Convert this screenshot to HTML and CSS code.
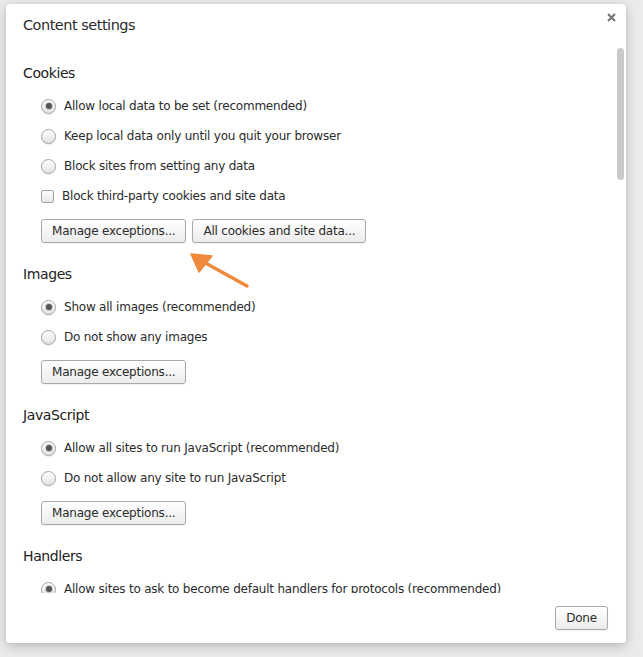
FILE: index.html
```html
<!DOCTYPE html>
<html lang="en">
<head>
<meta charset="utf-8">
<title>Content settings</title>
<link rel="stylesheet" href="styles.css">
</head>
<body>
<div class="dialog">
  <div class="header">
    <h1 class="title">Content settings</h1>
    <button class="close" aria-label="Close">
      <svg width="9" height="9" viewBox="0 0 9 9"><path d="M1 1 L8 8 M8 1 L1 8" stroke="#727272" stroke-width="2" fill="none"/></svg>
    </button>
  </div>
  <div class="body">
    <div class="scroll">
      <section class="section">
        <h2 class="heading">Cookies</h2>
        <label class="opt"><span class="radio checked"></span>Allow local data to be set (recommended)</label>
        <label class="opt"><span class="radio"></span>Keep local data only until you quit your browser</label>
        <label class="opt"><span class="radio"></span>Block sites from setting any data</label>
        <label class="opt"><span class="check"></span>Block third-party cookies and site data</label>
        <div class="btns">
          <button class="btn">Manage exceptions...</button>
          <button class="btn">All cookies and site data...</button>
        </div>
      </section>
      <section class="section">
        <h2 class="heading">Images</h2>
        <label class="opt"><span class="radio checked"></span>Show all images (recommended)</label>
        <label class="opt"><span class="radio"></span>Do not show any images</label>
        <div class="btns">
          <button class="btn">Manage exceptions...</button>
        </div>
      </section>
      <section class="section">
        <h2 class="heading">JavaScript</h2>
        <label class="opt"><span class="radio checked"></span>Allow all sites to run JavaScript (recommended)</label>
        <label class="opt"><span class="radio"></span>Do not allow any site to run JavaScript</label>
        <div class="btns">
          <button class="btn">Manage exceptions...</button>
        </div>
      </section>
      <section class="section">
        <h2 class="heading">Handlers</h2>
        <label class="opt"><span class="radio checked"></span>Allow sites to ask to become default handlers for protocols (recommended)</label>
      </section>
    </div>
    <div class="scrollbar"></div>
  </div>
  <div class="footer">
    <button class="btn done">Done</button>
  </div>
</div>
<svg class="arrow" width="643" height="657" viewBox="0 0 643 657">
  <line x1="247" y1="286" x2="200" y2="260" stroke="#ef8a3d" stroke-width="3.5" stroke-linecap="round"/>
  <polygon points="191,254 212,256 199,272" fill="#ef8a3d" stroke="#ef8a3d" stroke-width="1.5" stroke-linejoin="round"/>
</svg>
</body>
</html>
```
FILE: styles.css
```css
html, body {
  margin: 0;
  height: 100%;
}
body {
  background: #ebebeb;
  padding: 4px 0 0 6px;
  box-sizing: border-box;
  overflow: hidden;
  font-family: "DejaVu Sans", "Liberation Sans", sans-serif;
  color: #2b2b2b;
}
.dialog {
  width: 620px;
  height: 639px;
  background: #fff;
  border-radius: 3px;
  box-shadow: 0 3px 12px rgba(0, 0, 0, 0.22), 0 0 1px rgba(0, 0, 0, 0.25);
  display: flex;
  flex-direction: column;
  overflow: hidden;
}
.header {
  height: 44px;
  box-sizing: border-box;
  padding: 13px 10px 0 17px;
  display: flex;
  justify-content: space-between;
  align-items: flex-start;
  flex: none;
}
.title {
  margin: 0;
  font-size: 14.5px;
  font-weight: normal;
  line-height: 16px;
  letter-spacing: -0.5px;
  color: #2b2b2b;
}
.close {
  border: 0;
  background: none;
  padding: 0;
  margin-top: -4px;
  width: 9px;
  height: 9px;
  display: block;
}
.close svg { display: block; }
.body {
  position: relative;
  height: 545px;
  flex: none;
  overflow: hidden;
}
.scroll {
  padding: 15px 0 0 17px;
}
.section + .section {
  margin-top: 21px;
}
.heading {
  margin: 0 0 8px;
  font-size: 14px;
  font-weight: normal;
  line-height: 20px;
  letter-spacing: -0.4px;
  color: #222;
}
.opt {
  display: flex;
  align-items: center;
  height: 30px;
  padding-left: 18px;
  font-size: 12px;
  letter-spacing: -0.22px;
  white-space: nowrap;
}
.radio {
  width: 13px;
  height: 13px;
  border-radius: 50%;
  border: 1px solid #a3a3a3;
  background: linear-gradient(#fdfdfd, #e3e3e3);
  box-shadow: inset 0 1px 1px rgba(255,255,255,0.9), 0 1px 1px rgba(0,0,0,0.08);
  margin-right: 8px;
  flex: none;
  position: relative;
}
.radio.checked::after {
  content: "";
  position: absolute;
  left: 3.5px;
  top: 3.5px;
  width: 6px;
  height: 6px;
  border-radius: 50%;
  background: #555;
  box-shadow: 0 0 0 1px rgba(90,90,90,0.25);
}
.check {
  width: 11px;
  height: 11px;
  border-radius: 2px;
  border: 1px solid #a3a3a3;
  background: linear-gradient(#fdfdfd, #e6e6e6);
  margin-right: 8px;
  flex: none;
}
.btns {
  display: flex;
  gap: 6px;
  padding-left: 18px;
  margin-top: 8px;
}
.btn {
  height: 24px;
  padding: 0 10px;
  border: 1px solid #a9a9a9;
  border-radius: 3px;
  background: linear-gradient(#ffffff, #ececec);
  font-family: "DejaVu Sans", "Liberation Sans", sans-serif;
  font-size: 12px;
  letter-spacing: -0.22px;
  color: #2b2b2b;
  box-shadow: 0 1px 1px rgba(0,0,0,0.06);
}
.scrollbar {
  position: absolute;
  top: 0;
  right: 2px;
  width: 7px;
  height: 132px;
  border-radius: 4px;
  background: #c9c9c9;
}
.footer {
  flex: 1;
  display: flex;
  justify-content: flex-end;
  align-items: flex-start;
  padding: 13px 18px 0 0;
}
.done {
  width: 53px;
  padding: 0;
}
.arrow {
  position: absolute;
  left: 0;
  top: 0;
  pointer-events: none;
}
```
